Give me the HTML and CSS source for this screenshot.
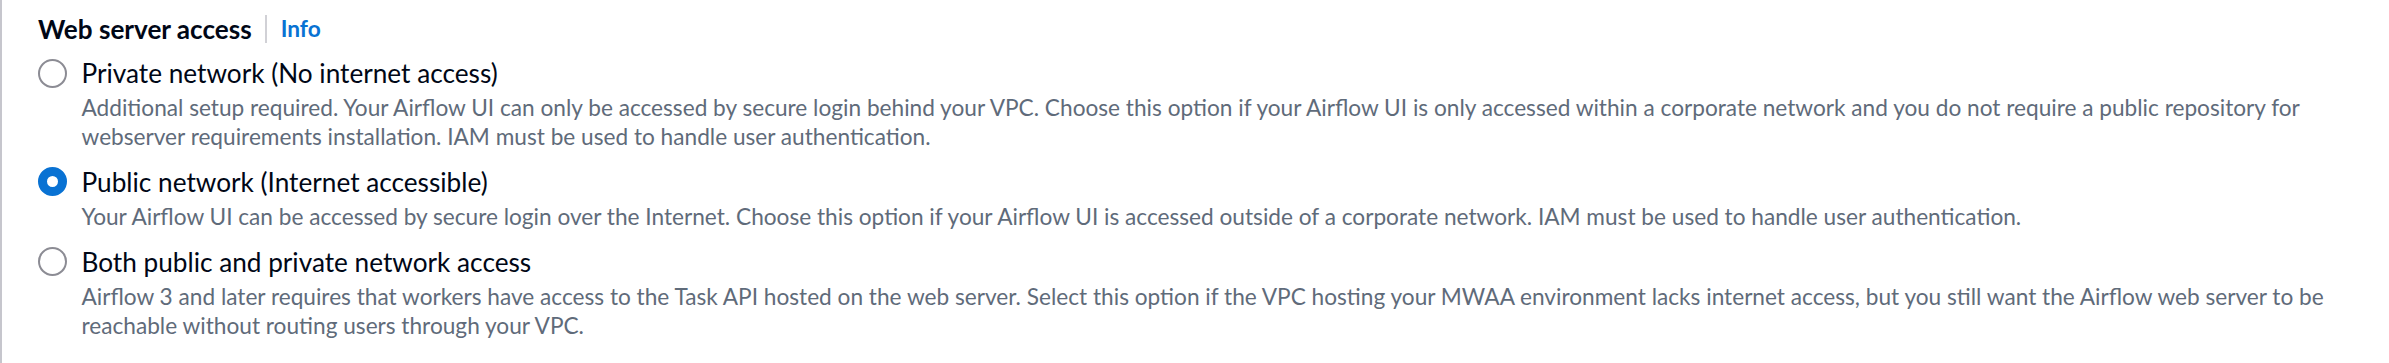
FILE: index.html
```html
<!DOCTYPE html>
<html lang="en">
<head>
<meta charset="utf-8">
<title>Web server access</title>
<link rel="stylesheet" href="styles.css">
</head>
<body>
<div class="panel">
  <div class="field-header">
    <span class="field-label">Web server access</span>
    <span class="divider"></span>
    <a class="info-link" href="#">Info</a>
  </div>
  <div class="radio-group" role="radiogroup">
    <label class="radio">
      <input class="radio-control" type="radio" name="access" value="private">
      <span class="radio-text">
        <span class="radio-label">Private network (No internet access)</span>
        <span class="radio-desc">Additional setup required. Your Airflow UI can only be accessed by secure login behind your VPC. Choose this option if your Airflow UI is only accessed within a corporate network and you do not require a public repository for webserver requirements installation. IAM must be used to handle user authentication.</span>
      </span>
    </label>
    <label class="radio">
      <input class="radio-control" type="radio" name="access" value="public" checked>
      <span class="radio-text">
        <span class="radio-label">Public network (Internet accessible)</span>
        <span class="radio-desc">Your Airflow UI can be accessed by secure login over the Internet. Choose this option if your Airflow UI is accessed outside of a corporate network. IAM must be used to handle user authentication.</span>
      </span>
    </label>
    <label class="radio">
      <input class="radio-control" type="radio" name="access" value="both">
      <span class="radio-text">
        <span class="radio-label">Both public and private network access</span>
        <span class="radio-desc">Airflow 3 and later requires that workers have access to the Task API hosted on the web server. Select this option if the VPC hosting your MWAA environment lacks internet access, but you still want the Airflow web server to be reachable without routing users through your VPC.</span>
      </span>
    </label>
  </div>
</div>
</body>
</html>
```
FILE: styles.css
```css
html, body {
  margin: 0;
  padding: 0;
  background: #ffffff;
}

body {
  font-family: "Lato", "Liberation Sans", sans-serif;
  color: #000716;
}

.panel {
  box-sizing: border-box;
  min-height: 100vh;
  border-left: 2px solid #c6c6cd;
  padding: 9px 20px 0 36px;
}

.field-header {
  display: flex;
  align-items: center;
  height: 40px;
}

.field-label {
  font-size: 26.1px;
  font-weight: 700;
  line-height: 40px;
  color: #000716;
}

.divider {
  width: 2px;
  height: 28px;
  background: #d1d1d6;
  margin: 0 14px 0 13px;
}

.info-link {
  font-size: 22.7px;
  font-weight: 700;
  line-height: 40px;
  color: #0972d3;
  text-decoration: none;
}

.radio-group {
  display: flex;
  flex-direction: column;
  gap: 10.8px;
  margin-top: 4px;
}

.radio {
  display: flex;
  align-items: flex-start;
  gap: 14.5px;
  cursor: pointer;
}

.radio-control {
  appearance: none;
  -webkit-appearance: none;
  box-sizing: border-box;
  flex: 0 0 auto;
  width: 29px;
  height: 29px;
  margin: 5.5px 0 0 0;
  border: 2px solid #8c8c94;
  border-radius: 50%;
  background: #ffffff;
}

.radio-control:checked {
  border: 9.5px solid #0972d3;
}

.radio-text {
  display: flex;
  flex-direction: column;
  min-width: 0;
}

.radio-label {
  font-size: 26.2px;
  line-height: 40px;
  color: #000716;
}

.radio-desc {
  font-size: 22.65px;
  line-height: 29px;
  color: #5f6b7a;
}
```
